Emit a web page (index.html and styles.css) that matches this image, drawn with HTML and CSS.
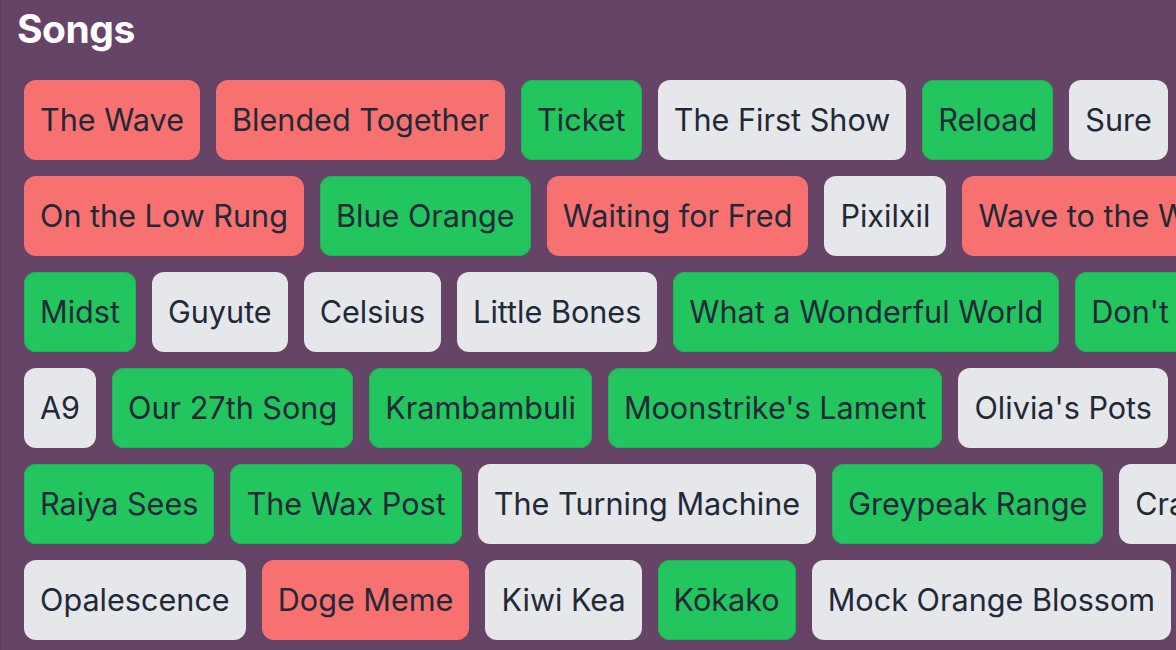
FILE: index.html
```html
<!DOCTYPE html>
<html lang="en">
<head>
<meta charset="utf-8">
<title>Songs</title>
<link rel="stylesheet" href="styles.css">
</head>
<body>
<main class="page">
  <h1 class="title">Songs</h1>
  <div class="rows">
    <div class="row">
      <span class="tag red">The Wave</span>
      <span class="tag red">Blended Together</span>
      <span class="tag green">Ticket</span>
      <span class="tag gray">The First Show</span>
      <span class="tag green">Reload</span>
      <span class="tag gray">Sure</span>
    </div>
    <div class="row">
      <span class="tag red">On the Low Rung</span>
      <span class="tag green">Blue Orange</span>
      <span class="tag red">Waiting for Fred</span>
      <span class="tag gray">Pixilxil</span>
      <span class="tag red">Wave to the Wind</span>
    </div>
    <div class="row">
      <span class="tag green">Midst</span>
      <span class="tag gray">Guyute</span>
      <span class="tag gray">Celsius</span>
      <span class="tag gray">Little Bones</span>
      <span class="tag green">What a Wonderful World</span>
      <span class="tag green">Don't Stop</span>
    </div>
    <div class="row">
      <span class="tag gray">A9</span>
      <span class="tag green">Our 27th Song</span>
      <span class="tag green">Krambambuli</span>
      <span class="tag green">Moonstrike's Lament</span>
      <span class="tag gray">Olivia's Pots</span>
    </div>
    <div class="row">
      <span class="tag green">Raiya Sees</span>
      <span class="tag green">The Wax Post</span>
      <span class="tag gray">The Turning Machine</span>
      <span class="tag green">Greypeak Range</span>
      <span class="tag gray">Crane</span>
    </div>
    <div class="row">
      <span class="tag gray">Opalescence</span>
      <span class="tag red">Doge Meme</span>
      <span class="tag gray">Kiwi Kea</span>
      <span class="tag green">Kōkako</span>
      <span class="tag gray">Mock Orange Blossom</span>
    </div>
  </div>
</main>
</body>
</html>
```

FILE: styles.css
```css
html, body {
  margin: 0;
  padding: 0;
  height: 100%;
  overflow: hidden;
}

body {
  background: #654468;
  font-family: Inter, "Noto Sans", "Liberation Sans", sans-serif;
  color: #1f2937;
}

.page {
  height: 100%;
  box-sizing: border-box;
  border-left: 1px solid #5d3d60;
}

.title {
  margin: 0;
  padding: 6px 16px 0;
  font-size: 39px;
  line-height: 46px;
  font-weight: 700;
  color: #ffffff;
  letter-spacing: -0.5px;
}

.rows {
  display: flex;
  flex-direction: column;
  gap: 16px;
  padding: 28px 0 0 23px;
}

.row {
  display: flex;
  flex-wrap: nowrap;
  gap: 16px;
}

.tag {
  flex: none;
  display: block;
  padding: 20px 16px;
  font-size: 30.6px;
  line-height: 40px;
  border-radius: 12px;
  white-space: nowrap;
}

.red { background: #f87171; }
.green { background: #22c55e; box-shadow: inset 0 0 0 1px #21b558; }
.gray { background: #e5e7eb; }
```
